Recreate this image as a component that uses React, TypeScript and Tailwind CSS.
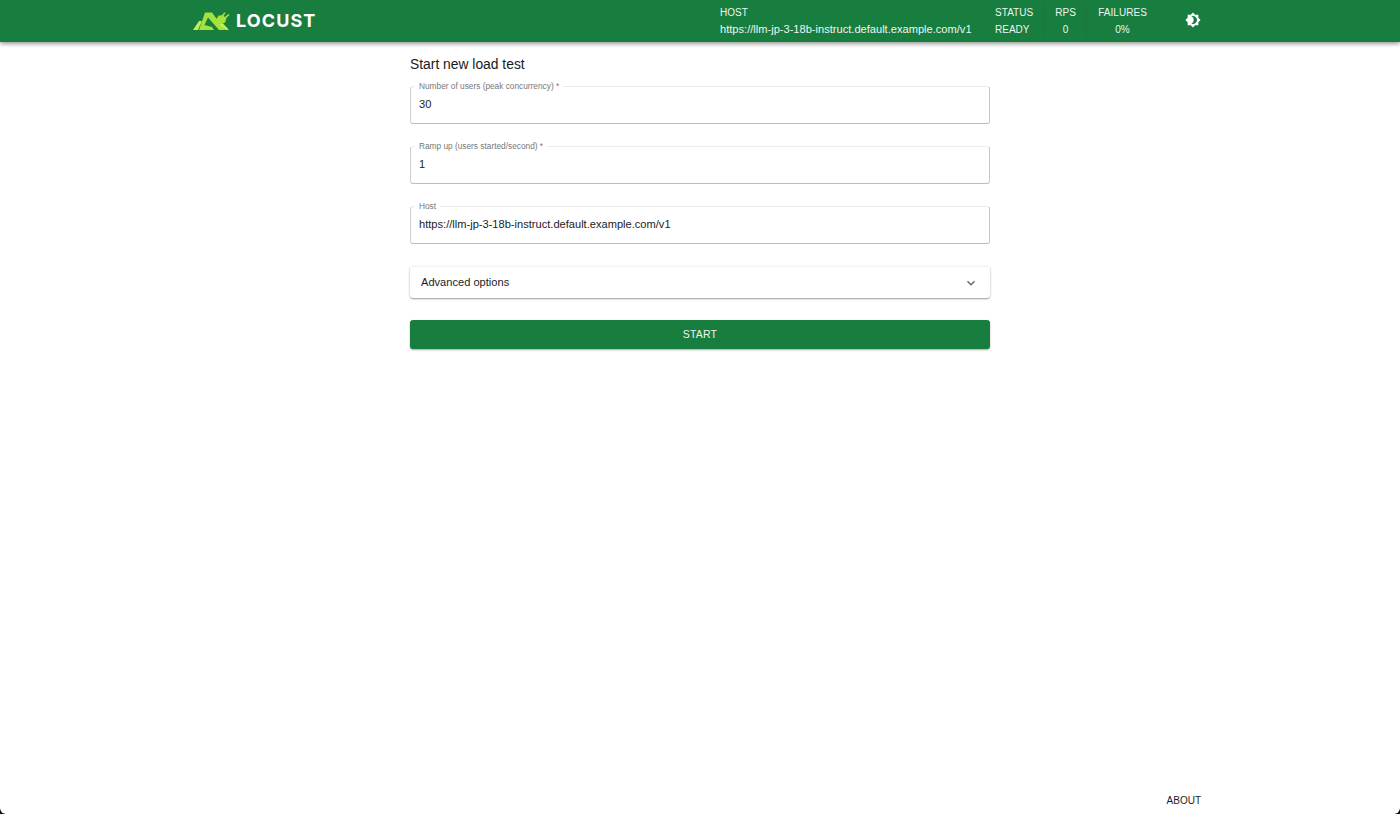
const sans = "font-['Liberation_Sans','Helvetica',Arial,sans-serif]";

function Field({ label, value }: { label: string; value: string }) {
  return (
    <div className="relative flex h-[38px] items-center rounded-[3px] border border-t-[#ececec] border-l-[#d0d0d0] border-r-[#c8c8c8] border-b-[#bdbdbd] pb-[2px] pl-[8px]">
      <span className="absolute left-[4px] top-[-5px] h-[9px] whitespace-nowrap bg-white px-[4px] text-[8.3px] leading-[9px] text-[#777]">
        {label}
      </span>
      <span className="text-[11.1px] leading-[14px] text-[#1c1c1c]">{value}</span>
    </div>
  );
}

function Stat({ title, value, className, big }: { title: string; value: string; className: string; big?: boolean }) {
  return (
    <div className={`flex flex-col gap-[6px] pb-[1px] ${className}`}>
      <span className="text-[10px] leading-[11px] tracking-[0.05px] text-[#f0f5f1]">{title}</span>
      <span className={`${big ? "text-[11.1px]" : "text-[10px]"} leading-[11px] text-[#f0f5f1]`}>{value}</span>
    </div>
  );
}

function Logo() {
  return (
    <svg width="37" height="19" viewBox="0 0 37 19" className="shrink-0">
      <polygon fill="#c2ef55" points="0,18 6,9 9,9 5,18" />
      <polygon fill="#a4e23c" points="6,18 12,0.5 19,0.5 32,18 26,18 15,5.5 11.5,13 19,15 21,18" />
      <polygon fill="#a4e23c" points="17.5,4.5 22.5,9 25.5,3.5 30,3.5 33.5,6.5 32,10.5 28,12.5 25,13" />
      <polygon fill="#a4e23c" points="28,4 31.5,0.3 32.5,1 29.8,5" />
      <polygon fill="#a4e23c" points="31,5.5 35.5,2 36.5,3 32.3,6.8" />
      <polygon fill="#c2ef55" points="26,12.5 30,11.5 36,17.8 32.5,18" />
    </svg>
  );
}

export default function App() {
  return (
    <div className={`h-[814px] w-[1400px] overflow-hidden bg-black ${sans}`}>
      <div className="flex h-full flex-col rounded-b-[6px] bg-white">
        <header className="relative z-10 h-[42px] shrink-0 bg-[#177e3f] shadow-[0_2px_4px_rgba(0,0,0,0.4)]">
          <div className="ml-[193px] flex h-full w-[1008px] items-center justify-between">
            <div className="flex items-center gap-[6px]">
              <Logo />
              <span className="font-['Inter',sans-serif] text-[18px] font-bold leading-[20px] tracking-[1.1px] text-white">LOCUST</span>
            </div>
            <div className="flex h-full items-center">
              <Stat title="HOST" value="https://llm-jp-3-18b-instruct.default.example.com/v1" big className="w-[275px] items-start text-left" />
              <Stat title="STATUS" value="READY" className="w-[49px] items-start" />
              <div className="h-[34px] w-px bg-[#1a7440]" />
              <Stat title="RPS" value="0" className="w-[41px] items-center" />
              <div className="h-[34px] w-px bg-[#1a7440]" />
              <Stat title="FAILURES" value="0%" className="w-[71px] items-center" />
              <svg viewBox="0 0 24 24" width="16" height="16" fill="#fff" className="mb-[2px] ml-[27px]">
                <path d="M20 8.69V4h-4.69L12 .69 8.69 4H4v4.69L.69 12 4 15.31V20h4.69L12 23.31 15.31 20H20v-4.69L23.31 12 20 8.69zM12 18c-.89 0-1.74-.2-2.5-.55C11.56 16.5 13 14.42 13 12s-1.44-4.5-3.5-5.45C10.26 6.2 11.11 6 12 6c3.31 0 6 2.69 6 6s-2.69 6-6 6z" />
              </svg>
            </div>
          </div>
        </header>

        <main className="mx-auto flex w-[580px] flex-1 flex-col pt-[14px]">
          <h1 className="mb-[14px] text-[13.85px] font-normal leading-[16px] text-[#1a1a1a]">Start new load test</h1>
          <div className="flex flex-col gap-[22px]">
            <Field label="Number of users (peak concurrency) *" value="30" />
            <Field label="Ramp up (users started/second) *" value="1" />
            <Field label="Host" value="https://llm-jp-3-18b-instruct.default.example.com/v1" />
            <div className="flex h-[32px] items-center justify-between rounded-[3px] border-t border-t-[#f3f3f3] pl-[11px] pr-[11px] shadow-[0_1px_2px_rgba(0,0,0,0.4)]">
              <span className="text-[11.1px] text-[#1c1c1c]">Advanced options</span>
              <svg viewBox="0 0 24 24" width="16" height="16" fill="#666">
                <path d="M16.59 8.59 12 13.17 7.41 8.59 6 10l6 6 6-6z" />
              </svg>
            </div>
            <button className="h-[29px] rounded-[3px] bg-[#177e3f] text-[10.5px] tracking-[0.2px] text-[#f0f5f1] shadow-[0_1px_2px_rgba(0,0,0,0.35)]">
              START
            </button>
          </div>
        </main>

        <footer className="ml-[193px] flex w-[1008px] justify-end pb-[8px]">
          <span className="text-[10px] leading-[11px] text-[#1c1c1c]">ABOUT</span>
        </footer>
      </div>
    </div>
  );
}
